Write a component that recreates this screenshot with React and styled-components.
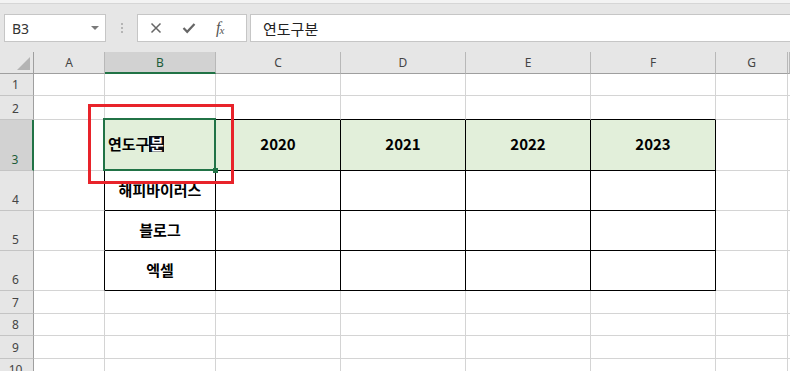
import React from "react";
import styled, { createGlobalStyle, css } from "styled-components";

const GlobalStyle = createGlobalStyle`
  html, body {
    margin: 0;
    padding: 0;
    background: #ffffff;
    overflow: hidden;
    height: 371px;
  }
  * {
    box-sizing: border-box;
  }
`;

const GREEN = "#217346";
const GRID = "#d4d4d4";
const INK = "#000000";

const Page = styled.div`
  width: 790px;
  height: 371px;
  overflow: hidden;
  font-family: "Noto Sans", "Noto Sans CJK KR", sans-serif;
`;

const TopStrip = styled.div`
  height: 4px;
  background: #f3f3f3;
  border-bottom: 1px solid #d6d6d6;
`;

const FormulaBar = styled.div`
  height: 48px;
  background: #e6e6e6;
  display: flex;
  align-items: flex-start;
  padding: 10px 0 0 4px;
`;

const NameBox = styled.div`
  width: 102px;
  height: 28px;
  background: #ffffff;
  border: 1px solid #c6c6c6;
  display: flex;
  align-items: center;
  justify-content: space-between;
  padding: 0 6px 0 7px;
  font-size: 14px;
  color: #333333;
`;

const Caret = styled.span`
  width: 0;
  height: 0;
  border-left: 4px solid transparent;
  border-right: 4px solid transparent;
  border-top: 4px solid #7a7a7a;
`;

const Grip = styled.div`
  width: 31px;
  height: 28px;
  display: flex;
  flex-direction: column;
  align-items: center;
  justify-content: center;
  gap: 2px;
  span {
    width: 2px;
    height: 2px;
    background: #b5b5b5;
  }
`;

const ButtonBox = styled.div`
  width: 110px;
  height: 28px;
  background: #ffffff;
  border: 1px solid #c6c6c6;
  display: flex;
  align-items: center;
  padding-left: 12px;
  gap: 20px;
  margin-right: 3px;
`;

const Fx = styled.span`
  font-family: "Liberation Serif", serif;
  font-style: italic;
  font-size: 16px;
  color: #555555;
  letter-spacing: -1px;
  sub {
    font-size: 11px;
    vertical-align: -1px;
  }
`;

const FormulaInput = styled.div`
  flex: 1;
  height: 28px;
  background: #ffffff;
  border: 1px solid #c6c6c6;
  border-right: none;
  display: flex;
  align-items: center;
  padding-left: 12px;
  font-family: "Noto Sans CJK KR", sans-serif;
  font-size: 15px;
  color: #222222;
`;

const Sheet = styled.div`
  display: grid;
  grid-template-columns: 34px 71px 111px 125px 125px 125px 125px 72px 1fr;
  grid-template-rows: 22px 22px 24px 51px 40px 40px 40px 23px 22px 23px 22px;
`;

const Corner = styled.div`
  background: #e6e6e6;
  border-right: 1px solid #9f9f9f;
  border-bottom: 1px solid #9f9f9f;
  position: relative;
  &::after {
    content: "";
    position: absolute;
    right: 3px;
    bottom: 3px;
    width: 0;
    height: 0;
    border-left: 13px solid transparent;
    border-bottom: 13px solid #b4b4b4;
  }
`;

const ColHead = styled.div`
  background: ${(p) => (p.$active ? "#d2d2d2" : "#e6e6e6")};
  border-right: 1px solid #b8b8b8;
  border-bottom: ${(p) => (p.$active ? `2px solid ${GREEN}` : "1px solid #9f9f9f")};
  display: flex;
  align-items: center;
  justify-content: center;
  font-size: 12px;
  color: ${(p) => (p.$active ? "#1d5c38" : "#444444")};
  padding-top: ${(p) => (p.$active ? "1px" : "0")};
`;

const RowHead = styled.div`
  background: ${(p) => (p.$active ? "#d2d2d2" : "#e6e6e6")};
  border-right: ${(p) => (p.$active ? `2px solid ${GREEN}` : "1px solid #9f9f9f")};
  border-bottom: 1px solid #c4c4c4;
  display: flex;
  align-items: flex-end;
  justify-content: center;
  padding: 0 2px 2px 0;
  font-size: 12px;
  line-height: 16px;
  color: ${(p) => (p.$active ? "#1d5c38" : "#444444")};
`;

const Cell = styled.div`
  position: relative;
  background: ${(p) => p.$fill || "#ffffff"};
  border-right: ${(p) => (p.$right ? `1px solid ${p.$right}` : "none")};
  border-bottom: 1px solid ${(p) => p.$bottom};
  display: flex;
  align-items: center;
  justify-content: ${(p) => (p.$left ? "flex-start" : "center")};
  padding: 0 0 3px ${(p) => (p.$left ? "3px" : "0")};
  font-family: "Noto Sans CJK KR", sans-serif;
  font-weight: 700;
  font-size: 15px;
  color: #000000;
  ${(p) =>
    p.$selected &&
    css`
      &::after {
        content: "";
        position: absolute;
        left: -2px;
        top: -2px;
        right: -1px;
        bottom: -1px;
        border: 2px solid ${GREEN};
        z-index: 2;
        pointer-events: none;
      }
    `}
`;

const Label = styled.span`
  display: flex;
  align-items: center;
  white-space: nowrap;
`;

const FillHandle = styled.span`
  position: absolute;
  left: 108px;
  top: 48px;
  width: 5px;
  height: 5px;
  background: ${GREEN};
  z-index: 3;
`;

const Callout = styled.span`
  position: absolute;
  left: -17px;
  top: -16px;
  width: 146px;
  height: 80px;
  border: 3px solid #e8232a;
  z-index: 4;
  pointer-events: none;
`;

const Marked = styled.span`
  display: flex;
  align-items: center;
  justify-content: center;
  flex: 0 0 auto;
  width: 15px;
  height: 16px;
  margin-top: 1px;
  background: #0b0b16;
  color: #ffffff;
  line-height: 16px;
`;

const cols = ["A", "B", "C", "D", "E", "F", "G"];

const table = {
  3: ["연도구분", "2020", "2021", "2022", "2023"],
  4: ["해피바이러스", "", "", "", ""],
  5: ["블로그", "", "", "", ""],
  6: ["엑셀", "", "", "", ""],
};

function XIcon() {
  return (
    <svg width="12" height="12" viewBox="0 0 12 12">
      <path d="M1.5 1.5 L10.5 10.5 M10.5 1.5 L1.5 10.5" stroke="#666" strokeWidth="1.5" fill="none" />
    </svg>
  );
}

function CheckIcon() {
  return (
    <svg width="14" height="12" viewBox="0 0 14 12">
      <path d="M1.5 6 L5.2 9.8 L12.5 2" stroke="#666" strokeWidth="2.2" fill="none" />
    </svg>
  );
}

function renderCell(r, c) {
  const inTable = r >= 3 && r <= 6 && c >= 1 && c <= 5;
  const key = `${r}-${c}`;
  if (c === 7) {
    return <Cell key={key} $bottom={GRID} />;
  }
  const right = inTable || (c === 0 && r >= 3 && r <= 6) ? INK : GRID;
  const bottom = inTable || (r === 2 && c >= 1 && c <= 5) ? INK : GRID;
  const fill = r === 3 && inTable ? "#e2efda" : null;
  const text = inTable ? table[r][c - 1] : "";

  if (r === 3 && c === 1) {
    return (
      <Cell key={key} $right={right} $bottom={bottom} $fill={fill} $left $selected>
        <Label>
          <span>연도구</span>
          <Marked>분</Marked>
        </Label>
        <FillHandle />
        <Callout />
      </Cell>
    );
  }
  return (
    <Cell key={key} $right={right} $bottom={bottom} $fill={fill}>
      {text}
    </Cell>
  );
}

export default function App() {
  const rows = [1, 2, 3, 4, 5, 6, 7, 8, 9, 10];
  return (
    <Page>
      <GlobalStyle />
      <TopStrip />
      <FormulaBar>
        <NameBox>
          B3
          <Caret />
        </NameBox>
        <Grip>
          <span />
          <span />
          <span />
        </Grip>
        <ButtonBox>
          <XIcon />
          <CheckIcon />
          <Fx>
            f<sub>x</sub>
          </Fx>
        </ButtonBox>
        <FormulaInput>연도구분</FormulaInput>
      </FormulaBar>
      <Sheet>
        <Corner />
        {cols.map((c) => (
          <ColHead key={c} $active={c === "B"}>
            {c}
          </ColHead>
        ))}
        <ColHead />
        {rows.map((r) => (
          <React.Fragment key={r}>
            <RowHead $active={r === 3}>{r}</RowHead>
            {[0, 1, 2, 3, 4, 5, 6, 7].map((c) => renderCell(r, c))}
          </React.Fragment>
        ))}
      </Sheet>
    </Page>
  );
}
